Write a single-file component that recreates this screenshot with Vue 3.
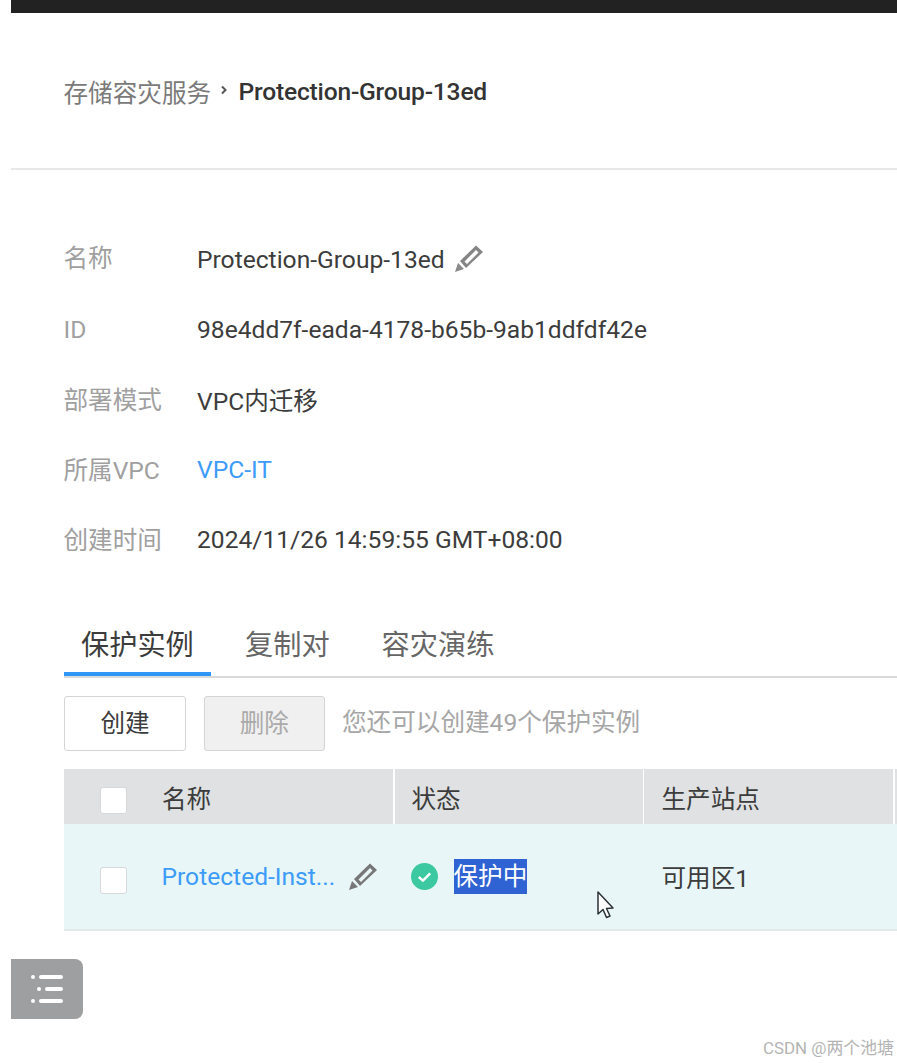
<script setup>
const meta = [
  { label: '名称', value: 'Protection-Group-13ed', edit: true },
  { label: 'ID', value: '98e4dd7f-eada-4178-b65b-9ab1ddfdf42e' },
  { label: '部署模式', value: 'VPC内迁移' },
  { label: '所属VPC', value: 'VPC-IT', link: true },
  { label: '创建时间', value: '2024/11/26 14:59:55 GMT+08:00' }
]
const tabs = ['保护实例', '复制对', '容灾演练']
</script>

<template>
  <div class="page">
    <div class="topbar"></div>

    <div class="crumbs">
      <span class="crumb-root">存储容灾服务</span>
      <svg class="chev" width="10" height="12" viewBox="0 0 10 12"><path d="M3 2.5 L6.5 6 L3 9.5" fill="none" stroke="#555" stroke-width="2"/></svg>
      <span class="crumb-current">Protection-Group-13ed</span>
    </div>

    <div class="body">
      <dl class="meta">
        <div v-for="m in meta" :key="m.label" class="meta-row">
          <dt>{{ m.label }}</dt>
          <dd :class="{ link: m.link }">
            {{ m.value }}
            <svg v-if="m.edit" class="pencil" width="30" height="30" viewBox="0 0 30 30">
              <path d="M1 28 L4 19 L10 25 Z" fill="#8a8a8a"/>
              <path fill-rule="evenodd" d="M6 17 L22 1.5 L29 8 L12 24 Z M10.5 17.5 L13 20 L24.5 8.5 L22 6 Z" fill="#858585"/>
            </svg>
          </dd>
        </div>
      </dl>

      <div class="tabs">
        <div v-for="(t, i) in tabs" :key="t" class="tab" :class="{ active: i === 0 }">{{ t }}</div>
      </div>

      <div class="toolbar">
        <button class="btn">创建</button>
        <button class="btn disabled">删除</button>
        <span class="hint">您还可以创建49个保护实例</span>
      </div>

      <div class="table">
        <div class="thead">
          <div class="cell col-name"><span class="check"></span><span>名称</span></div>
          <div class="cell col-status">状态</div>
          <div class="cell col-site">生产站点</div>
          <div class="cell col-rest"></div>
        </div>
        <div class="trow">
          <div class="cell col-name">
            <span class="check"></span>
            <span class="link inst">Protected-Inst...</span>
            <svg class="pencil row-pencil" width="30" height="30" viewBox="0 0 30 30">
              <path d="M1 28 L4 19 L10 25 Z" fill="#777"/>
              <path fill-rule="evenodd" d="M6 17 L22 1.5 L29 8 L12 24 Z M10.5 17.5 L13 20 L24.5 8.5 L22 6 Z" fill="#777"/>
            </svg>
          </div>
          <div class="cell col-status">
            <svg class="ok" width="27" height="27" viewBox="0 0 26 26">
              <circle cx="13" cy="13" r="13" fill="#3cc8a0"/>
              <path d="M7.5 13.5 L11.5 17 L18.5 10" fill="none" stroke="#fff" stroke-width="2.4"/>
            </svg>
            <span class="selected">保护中</span>
          </div>
          <div class="cell col-site">可用区1</div>
          <div class="cell col-rest"></div>
        </div>
      </div>
    </div>

    <svg class="cursor" width="20" height="30" viewBox="0 0 20 30">
      <path d="M2 2 L2 24 L7 19.5 L10.5 27.5 L14 26 L10.5 18.5 L17 18 Z" fill="#fff" stroke="#2b3238" stroke-width="1.5" stroke-linejoin="round"/>
    </svg>

    <div class="float-btn">
      <svg width="34" height="30" viewBox="0 0 34 30">
        <circle cx="3" cy="3" r="2" fill="#fff"/><rect x="9" y="1" width="24" height="4" rx="2" fill="#fff"/>
        <circle cx="9" cy="15" r="2" fill="#fff"/><rect x="15" y="13" width="18" height="4" rx="2" fill="#fff"/>
        <circle cx="3" cy="27" r="2" fill="#fff"/><rect x="9" y="25" width="24" height="4" rx="2" fill="#fff"/>
      </svg>
    </div>

    <div class="watermark">CSDN @两个池塘</div>
  </div>
</template>

<style>
html, body { margin: 0; background: #fff; }
</style>

<style scoped>
.page {
  position: relative;
  width: 897px;
  height: 1063px;
  overflow: hidden;
  background: #fff;
  font-family: Roboto, "Noto Sans CJK SC", sans-serif;
  font-size: 24.6px;
  color: #3c3c3c;
  padding-left: 11px;
  box-sizing: border-box;
}
.topbar { height: 13px; background: #222; }
.crumbs {
  display: flex;
  align-items: center;
  height: 156.5px;
  padding: 3px 0 0 53px;
  box-sizing: border-box;
  border-bottom: 2px solid #e8e8e8;
}
.crumb-root { color: #7a7a7a; margin-bottom: 2px; margin-left: -0.5px; }
.chev { margin: 0 9.5px 4px 8px; }
.crumb-current { font-weight: 500; color: #333; letter-spacing: -0.2px; }
.body { padding: 54.5px 0 0 53px; }
.meta { margin: 0; }
.meta-row { display: flex; align-items: center; height: 70px; }
.meta-row dt { width: 133px; color: #a0a0a0; margin-top: -2px; margin-left: -0.5px; margin-right: 0.5px; }
.meta-row:first-child dt { margin-top: -6px; }
.meta-row:nth-child(2) dt { margin-top: 0; }
.meta-row dd { margin: 0; display: flex; align-items: center; gap: 9px; color: #3c3c3c; }
.link, .meta-row dd.link { color: #3d9bfa; }
.pencil { flex: none; }
.tabs {
  display: flex;
  height: 57px;
  margin-top: 45px;
  border-bottom: 2px solid #d8dadc;
}
.tab {
  font-size: 28.2px;
  line-height: 40px;
  padding: 7px 17px 0;
  color: #666;
  height: 57px;
  box-sizing: border-box;
}
.tab.active { color: #3c3c3c; border-bottom: 4px solid #3096f5; width: 147px; white-space: nowrap; }
.tab + .tab { margin-left: 17px; }
.tab + .tab + .tab { margin-left: 18px; }
.toolbar { display: flex; align-items: center; margin-top: 18px; height: 55px; }
.btn {
  width: 122px;
  height: 55px;
  background: #fff;
  border: 1.5px solid #d2d4d6;
  border-radius: 3px;
  font: inherit;
  color: #3c3c3c;
  padding: 0 0 5px;
  margin-right: 17.5px;
}
.btn.disabled { background: #f0f0f0; color: #aaa; width: 121.5px; margin-right: 17px; }
.hint { color: #a6a6a6; margin-bottom: 8px; }
.table { margin-top: 18px; }
.thead, .trow { display: flex; }
.thead { height: 55px; }
.trow { height: 107px; background: #e8f6f8; border-bottom: 2px solid #e2e8ea; box-sizing: border-box; }
.cell {
  display: flex;
  align-items: center;
  box-sizing: border-box;
  flex: none;
}
.thead .cell { background: #dfe1e2; margin-right: 1.5px; }
.thead .col-rest { margin-right: 0; }
.col-name { width: 329px; padding-left: 36px; }
.col-status { width: 248px; padding-left: 17px; }
.col-site { width: 249px; padding-left: 17.5px; }
.col-rest { flex: 1; }
.trow .col-name { width: 330.5px; }
.trow .col-status { width: 249.5px; }
.trow .col-site { width: 250.5px; }
.check {
  flex: none;
  width: 27px;
  height: 27px;
  background: #fff;
  border: 1.5px solid #d6d8da;
  border-radius: 3px;
  box-sizing: border-box;
  margin-right: 35px;
}
.thead .check { margin-top: 7px; }
.trow .check { margin-top: 7px; }
.inst { width: 172px; white-space: nowrap; margin-left: -0.5px; }
.row-pencil { margin: 0 0 0 14.5px; }
.ok { margin-left: -0.5px; margin-right: 15.5px; }
.selected {
  background: #2f62d3;
  color: #fff;
  height: 35px;
  line-height: 35px;
}
.trow .col-site { padding-bottom: 2px; }
.cursor { position: absolute; left: 596px; top: 890px; }
.float-btn {
  position: absolute;
  left: 11px;
  top: 959px;
  width: 72px;
  height: 60px;
  background: #9e9fa0;
  border-radius: 0 8px 8px 0;
  display: flex;
  align-items: center;
  justify-content: center;
}
.watermark {
  position: absolute;
  right: 3px;
  top: 1037px;
  font-size: 16.9px;
  line-height: 22px;
  color: #b4b4b4;
  white-space: nowrap;
}
</style>
